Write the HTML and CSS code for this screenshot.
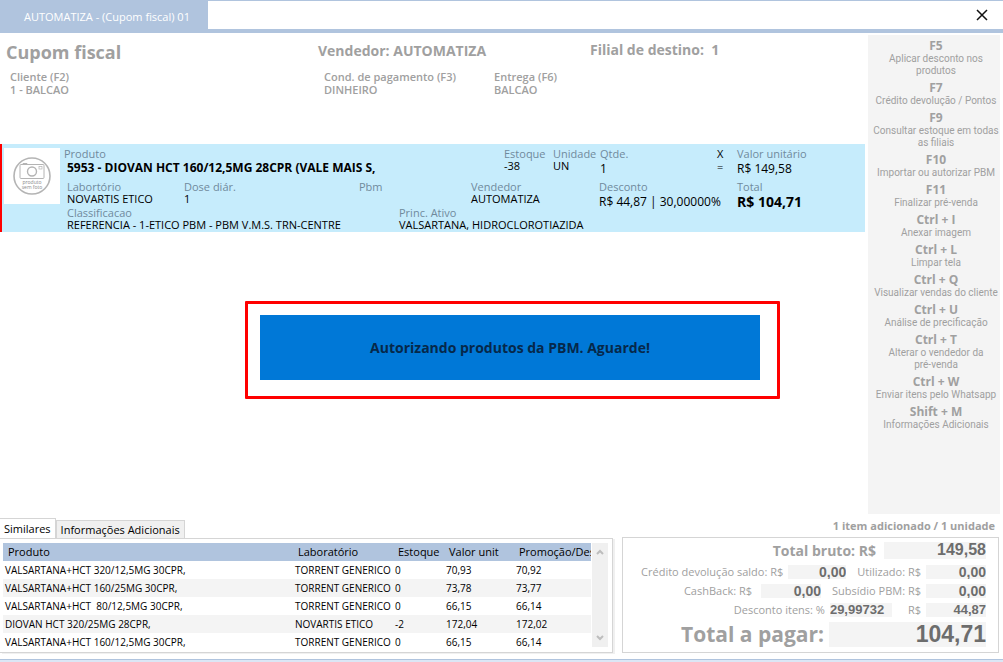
FILE: index.html
```html
<!DOCTYPE html>
<html lang="pt-BR">
<head>
<meta charset="utf-8">
<title>Cupom fiscal</title>
<link rel="stylesheet" href="styles.css">
</head>
<body>
<header class="topbar">
  <div class="window-tab">AUTOMATIZA - (Cupom fiscal) 01</div>
  <div class="topbar-space">
    <button class="close" type="button" aria-label="Fechar"><svg width="12" height="12" viewBox="0 0 12 12"><path d="M1 1L11 11M11 1L1 11" stroke="#111" stroke-width="1.5" fill="none"/></svg></button>
  </div>
</header>

<div class="workspace">
  <main class="sale">
    <div class="sale-head">
      <h1 class="title">Cupom fiscal</h1>
      <h2 class="seller">Vendedor: AUTOMATIZA</h2>
      <h2 class="branch">Filial de destino:&nbsp; 1</h2>
    </div>
    <div class="sale-info">
      <div>Cliente (F2)<br>1 - BALCAO</div>
      <div>Cond. de pagamento (F3)<br>DINHEIRO</div>
      <div>Entrega (F6)<br>BALCAO</div>
    </div>

    <section class="item">
      <div class="thumb">
        <svg width="38" height="38" viewBox="0 0 38 38" fill="none" stroke="#b4b4b4">
          <circle cx="19" cy="19" r="18" stroke-width="1.6"/>
          <rect x="7" y="7.500" width="24" height="14" rx="1"/>
          <path d="M10 7.500V6.500h4v1" />
          <circle cx="19" cy="14.500" r="4.500" stroke-width="1.4"/>
          <rect x="26" y="9.500" width="3" height="2.500" stroke-width=".7"/>
          <text class="thumb-text" x="19" y="27" text-anchor="middle">produto</text>
          <text class="thumb-text" x="19" y="32" text-anchor="middle">sem foto</text>
        </svg>
      </div>
      <div class="item-body">
        <div class="item-row row-product">
          <div class="field"><span class="label">Produto</span><strong class="value name">5953 - DIOVAN HCT 160/12,5MG 28CPR (VALE MAIS S,</strong></div>
          <div class="field"><span class="label">Estoque</span><span class="value">-38</span></div>
          <div class="field"><span class="label">Unidade</span><span class="value">UN</span></div>
          <div class="field"><span class="label">Qtde.</span><span class="value big">1</span></div>
          <div class="field"><span>X</span><span>=</span></div>
          <div class="field"><span class="label">Valor unitário</span><span class="value big">R$ 149,58</span></div>
        </div>
        <div class="item-row row-detail">
          <div class="field"><span class="label">Labortório</span><span class="value">NOVARTIS ETICO</span></div>
          <div class="field"><span class="label">Dose diár.</span><span class="value">1</span></div>
          <div class="field"><span class="label">Pbm</span></div>
          <div class="field"><span class="label">Vendedor</span><span class="value">AUTOMATIZA</span></div>
          <div class="field"><span class="label">Desconto</span><span class="value big">R$ 44,87 | 30,00000%</span></div>
          <div class="field"><span class="label">Total</span><strong class="value total">R$ 104,71</strong></div>
        </div>
        <div class="item-row row-class">
          <div class="field"><span class="label">Classificacao</span><span class="value">REFERENCIA - 1-ETICO PBM - PBM V.M.S. TRN-CENTRE</span></div>
          <div class="field"><span class="label">Princ. Ativo</span><span class="value">VALSARTANA, HIDROCLOROTIAZIDA</span></div>
        </div>
      </div>
    </section>
  </main>

  <aside class="shortcuts">
    <dl>
      <dt>F5</dt><dd>Aplicar desconto nos<br>produtos</dd>
      <dt>F7</dt><dd>Crédito devolução / Pontos</dd>
      <dt>F9</dt><dd>Consultar estoque em todas<br>as filiais</dd>
      <dt>F10</dt><dd>Importar ou autorizar PBM</dd>
      <dt>F11</dt><dd>Finalizar pré-venda</dd>
      <dt>Ctrl + I</dt><dd>Anexar imagem</dd>
      <dt>Ctrl + L</dt><dd>Limpar tela</dd>
      <dt>Ctrl + Q</dt><dd>Visualizar vendas do cliente</dd>
      <dt>Ctrl + U</dt><dd>Análise de precificação</dd>
      <dt>Ctrl + T</dt><dd>Alterar o vendedor da<br>pré-venda</dd>
      <dt>Ctrl + W</dt><dd>Enviar itens pelo Whatsapp</dd>
      <dt>Shift + M</dt><dd>Informações Adicionais</dd>
    </dl>
  </aside>
</div>

<footer class="bottom">
  <section class="similar">
    <div class="tabs" role="tablist">
      <button class="tab active" type="button" role="tab" aria-selected="true">Similares</button>
      <button class="tab" type="button" role="tab" aria-selected="false">Informações Adicionais</button>
    </div>
    <div class="panel">
      <div class="table-clip">
        <table class="products">
          <colgroup><col class="c-product"><col class="c-lab"><col class="c-stock"><col class="c-price"><col class="c-promo"></colgroup>
          <thead><tr><th>Produto</th><th>Laboratório</th><th>Estoque</th><th>Valor unit</th><th>Promoção/Des</th></tr></thead>
          <tbody>
            <tr><td>VALSARTANA+HCT 320/12,5MG 30CPR,</td><td>TORRENT GENERICO</td><td>0</td><td>70,93</td><td>70,92</td></tr>
            <tr><td>VALSARTANA+HCT 160/25MG 30CPR,</td><td>TORRENT GENERICO</td><td>0</td><td>73,78</td><td>73,77</td></tr>
            <tr><td>VALSARTANA+HCT&nbsp; 80/12,5MG 30CPR,</td><td>TORRENT GENERICO</td><td>0</td><td>66,15</td><td>66,14</td></tr>
            <tr><td>DIOVAN HCT 320/25MG 28CPR,</td><td>NOVARTIS ETICO</td><td>-2</td><td>172,04</td><td>172,02</td></tr>
            <tr><td>VALSARTANA+HCT 160/12,5MG 30CPR,</td><td>TORRENT GENERICO</td><td>0</td><td>66,15</td><td>66,14</td></tr>
          </tbody>
        </table>
      </div>
      <div class="scrollbar">
        <svg width="8" height="6" viewBox="0 0 8 6"><path d="M1 5L4 2L7 5" stroke="#bdbdbd" stroke-width="2" fill="none"/></svg>
        <svg width="8" height="6" viewBox="0 0 8 6"><path d="M1 1L4 4L7 1" stroke="#bdbdbd" stroke-width="2" fill="none"/></svg>
      </div>
    </div>
  </section>

  <section class="summary">
    <p class="count">1 item adicionado / 1 unidade</p>
    <form class="totals">
      <div class="total-row gross"><label for="gross">Total bruto: R$</label><input id="gross" value="149,58" readonly></div>
      <div class="total-row">
        <label for="credit">Crédito devolução saldo: R$</label><input class="mid" id="credit" value="0,00" readonly>
        <label class="second" for="used">Utilizado: R$</label><input id="used" value="0,00" readonly>
      </div>
      <div class="total-row">
        <label for="cash">CashBack: R$</label><input class="mid cash" id="cash" value="0,00" readonly>
        <label class="second" for="subsidy">Subsídio PBM: R$</label><input id="subsidy" value="0,00" readonly>
      </div>
      <div class="total-row">
        <label for="pct">Desconto itens: %</label><input class="mid pct" id="pct" value="29,99732" readonly>
        <label class="second short" for="disc">R$</label><input class="disc" id="disc" value="44,87" readonly>
      </div>
      <div class="total-row pay"><label for="pay">Total a pagar:</label><input id="pay" value="104,71" readonly></div>
    </form>
  </section>
</footer>

<div class="modal-layer">
  <div class="modal" role="alertdialog" aria-labelledby="modal-text"><p id="modal-text" class="modal-text">Autorizando produtos da PBM. Aguarde!</p></div>
</div>
</body>
</html>
```

FILE: styles.css
```css
* { box-sizing: border-box; }
body {
  margin: 0;
  min-height: 100vh;
  display: flex;
  flex-direction: column;
  position: relative;
  background: #fff;
  color: #000;
  font: 11px/13px "Open Sans", "Noto Sans", sans-serif;
}
h1, h2, p, dl, dd { margin: 0; }

.topbar { display: flex; height: 33px; background: #b0c4de; }
.window-tab { width: 208px; padding-left: 24px; line-height: 34px; color: #fff; }
.topbar-space {
  flex: 1;
  display: flex;
  justify-content: flex-end;
  align-items: center;
  margin: 1px 0 4px;
  padding-right: 15px;
  background: #fff;
}
.close { display: flex; padding: 0; border: 0; background: none; }

.workspace { flex: 1; display: flex; gap: 3px; padding: 2px 3px 0 0; }
.sale { flex: 1; }
.sale-head {
  display: grid;
  grid-template-columns: 312px 272px 1fr;
  padding: 4px 0 0 6px;
  color: #a0a0a0;
}
.title { font-size: 18px; line-height: 26px; }
.seller, .branch { font-size: 14px; line-height: 24px; }
.branch { line-height: 22px; }
.sale-info {
  display: grid;
  grid-template-columns: 314px 170px 1fr;
  padding: 5px 0 0 10px;
  color: #a0a0a0;
  font-weight: 600;
}

.item {
  display: flex;
  gap: 4px;
  margin-top: 48px;
  padding: 3px 0 0 2px;
  border-left: 2px solid #f00;
  background: #c6ecfc;
}
.thumb {
  width: 56px;
  height: 56px;
  display: flex;
  align-items: center;
  justify-content: center;
  margin-top: 1px;
  background: #fff;
}
.thumb-text { font: 5px "Open Sans", sans-serif; fill: #888; stroke: none; }
.item-body { flex: 1; white-space: nowrap; }
.item-row { display: grid; height: 26px; }
.row-product { grid-template-columns: 440px 49px 47px 117px 20px 1fr; height: 33px; }
.row-detail { grid-template-columns: 117px 175px 112px 128px 138px 1fr; padding-left: 3px; }
.row-class { grid-template-columns: 332px 1fr; padding-left: 3px; }
.field { display: flex; flex-direction: column; }
.label { color: #708a9c; }
.value { line-height: 12px; }
.name { padding-left: 3px; font-size: 12px; line-height: 15px; }
.big { font-size: 12px; line-height: 17px; }
.total { font-size: 14px; line-height: 17px; }

.shortcuts {
  width: 132px;
  padding: 3px 0 0 4px;
  background: #f4f4f4;
  color: #a0a0a0;
  text-align: center;
  white-space: nowrap;
}
.shortcuts dt { font-size: 12px; line-height: 15px; font-weight: 700; }
.shortcuts dd { margin-bottom: 3px; font: 10px/12px Roboto, "Open Sans", sans-serif; }

.bottom {
  display: flex;
  gap: 9px;
  padding: 4px 4px 7px 0;
  border-bottom: 2px solid #dbe6f5;
  box-shadow: inset 0 -1px #b0c4de;
}
.similar { flex: 1; }
.tabs { display: flex; align-items: flex-end; height: 20px; }
.tab {
  height: 18px;
  padding: 0 4px;
  border: 1px solid #d5d5d5;
  border-bottom: 0;
  background: #f0f0f0;
  font: 11px/16px "Open Sans", "Noto Sans", sans-serif;
  font-weight: 500;
}
.tab.active { height: 20px; border-left: 0; background: #fff; }
.panel {
  display: flex;
  height: 115px;
  padding: 4px 4px 0 3px;
  border: 1px solid #d5d5d5;
  border-left: 0;
  box-shadow: 2px 1px #f0f0f0;
}
.table-clip { flex: 1; width: 0; overflow: hidden; }
.products { width: 100%; border-collapse: collapse; table-layout: fixed; white-space: nowrap; }
.products th, .products td { height: 18px; overflow: hidden; text-align: left; line-height: 18px; }
.products th { padding: 0 0 0 5px; background: #b0c4de; font-weight: 500; }
.products td { padding: 0 0 0 2px; font-size: 10px; }
.products tbody tr:nth-child(even) { background: #f4f4f4; }
.c-product { width: 290px; }
.c-lab { width: 100px; }
.c-stock { width: 51px; }
.c-price { width: 70px; }
.scrollbar {
  width: 16px;
  display: flex;
  flex-direction: column;
  justify-content: space-between;
  align-items: center;
  margin: 0 0 5px 1px;
  padding: 6px 0;
  background: #f0f0f0;
}

.summary { width: 377px; color: #a0a0a0; }
.count { padding-right: 4px; line-height: 16px; font-weight: 700; text-align: right; }
.totals {
  display: flex;
  flex-direction: column;
  gap: 4px;
  margin-top: 3px;
  height: 116px;
  padding: 2px 12px 0 0;
  border: 1px solid #d5d5d5;
}
.total-row { display: flex; justify-content: flex-end; align-items: center; height: 15px; white-space: nowrap; }
.total-row input {
  width: 60px;
  height: 14px;
  margin-left: 5px;
  padding: 0;
  border: 0;
  background: #f4f4f4;
  color: #6d6d6d;
  font: bold 14px/14px "Liberation Sans", sans-serif;
  text-align: right;
}
.total-row .mid { width: 58px; }
.total-row .cash { width: 60px; margin-left: 9px; }
.total-row .pct { width: 62px; font-size: 13px; text-align: left; }
.total-row .disc { font-size: 13px; }
.second { margin-left: 11px; }
.second.short { margin-left: 16px; }
.total-row.gross { height: 20px; font-size: 14px; font-weight: 700; }
.total-row.gross input { width: 102px; height: 17px; margin-left: 8px; font-size: 16px; }
.total-row.pay { height: 26px; font-size: 21px; font-weight: 700; }
.total-row.pay input { width: 157px; height: 25px; font-size: 23px; }

.modal-layer {
  position: absolute;
  inset: 0;
  display: flex;
  align-items: center;
  justify-content: center;
  padding: 38px 0 0 22px;
}
.modal { padding: 11px 17px 16px 12px; border: 3px solid #f00; border-radius: 1px; }
.modal-text {
  width: 500px;
  background: #0078d7;
  color: #06284a;
  font-size: 14px;
  line-height: 65px;
  font-weight: 700;
  text-align: center;
}
```
